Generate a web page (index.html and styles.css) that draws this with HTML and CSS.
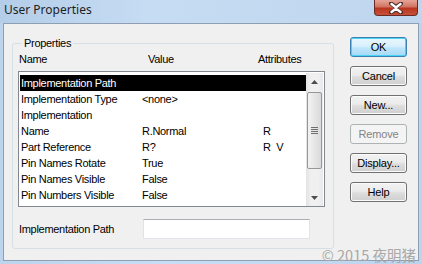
FILE: index.html
```html
<!DOCTYPE html>
<html lang="en">
<head>
    <meta charset="UTF-8">
    <title>User Properties</title>
    <link rel="stylesheet" href="styles.css">
</head>
<body>
    <div class="window">
        <div class="titlebar">
            <span class="title">User Properties</span>
            <div class="close-btn">
                <svg width="16" height="12" viewBox="0 0 16 12">
                    <path d="M3 1.5 L8 5 L13 1.5 M3 10.5 L8 7 L13 10.5" stroke="#4a2a2a" stroke-width="4" fill="none" stroke-linecap="round"/>
                    <path d="M3.5 2 L8 5.5 L12.5 2 M3.5 10 L8 6.5 L12.5 10" stroke="#ffffff" stroke-width="2.4" fill="none" stroke-linecap="round"/>
                </svg>
            </div>
        </div>

        <div class="client">
            <fieldset class="group">
                <legend>Properties</legend>

                <div class="list-head">
                    <span class="col-name">Name</span>
                    <span class="col-value">Value</span>
                    <span class="col-attr">Attributes</span>
                </div>

                <div class="listbox">
                    <div class="rows">
                        <div class="row selected"><span class="col-name">Implementation Path</span><span class="col-value"></span><span class="col-attr"></span></div>
                        <div class="row"><span class="col-name">Implementation Type</span><span class="col-value">&lt;none&gt;</span><span class="col-attr"></span></div>
                        <div class="row"><span class="col-name">Implementation</span><span class="col-value"></span><span class="col-attr"></span></div>
                        <div class="row"><span class="col-name">Name</span><span class="col-value">R.Normal</span><span class="col-attr">R</span></div>
                        <div class="row"><span class="col-name">Part Reference</span><span class="col-value">R?</span><span class="col-attr">R&nbsp;&nbsp;V</span></div>
                        <div class="row"><span class="col-name">Pin Names Rotate</span><span class="col-value">True</span><span class="col-attr"></span></div>
                        <div class="row"><span class="col-name">Pin Names Visible</span><span class="col-value">False</span><span class="col-attr"></span></div>
                        <div class="row"><span class="col-name">Pin Numbers Visible</span><span class="col-value">False</span><span class="col-attr"></span></div>
                    </div>
                    <div class="scrollbar">
                        <div class="arrow">
                            <svg width="7" height="4" viewBox="0 0 7 4"><path d="M0 4 L3.5 0 L7 4 Z" fill="#4d4d4d"/></svg>
                        </div>
                        <div class="thumb">
                            <div class="grip"></div>
                            <div class="grip"></div>
                            <div class="grip"></div>
                            <div class="grip"></div>
                        </div>
                        <div class="track"></div>
                        <div class="arrow">
                            <svg width="7" height="4" viewBox="0 0 7 4"><path d="M0 0 L7 0 L3.5 4 Z" fill="#4d4d4d"/></svg>
                        </div>
                    </div>
                </div>

                <div class="edit-row">
                    <label for="path">Implementation Path</label>
                    <input type="text" id="path">
                </div>
            </fieldset>

            <div class="buttons">
                <button class="default">OK</button>
                <button>Cancel</button>
                <button>New...</button>
                <button class="disabled">Remove</button>
                <button>Display...</button>
                <button>Help</button>
            </div>

            <div class="watermark">&copy; 2015 夜明猪</div>
        </div>
    </div>
</body>
</html>
```

FILE: styles.css
```css
body {
    margin: 0;
    width: 422px;
    height: 264px;
    overflow: hidden;
    font-family: 'Liberation Sans', Arial, sans-serif;
    font-size: 11px;
    letter-spacing: -0.3px;
    color: #000;
}

.window {
    width: 422px;
    height: 264px;
    box-sizing: border-box;
    background: linear-gradient(90deg, #bcd4ec 0%, #c8def4 40%, #bcd4ec 100%);
    display: flex;
    flex-direction: column;
}

.titlebar {
    height: 23px;
    display: flex;
    justify-content: space-between;
    align-items: flex-start;
    background: linear-gradient(90deg, #b4cde8 0%, #c5dcf3 35%, #bfd6ee 100%);
}

.title {
    font-family: 'Noto Sans', 'Open Sans', sans-serif;
    font-size: 12px;
    letter-spacing: 0;
    color: #1e1e1e;
    padding: 1px 0 0 4px;
    line-height: 18px;
}

.close-btn {
    width: 44px;
    height: 16px;
    margin-right: 4px;
    border: 1px solid #6b2b24;
    border-top: none;
    border-radius: 0 0 4px 4px;
    background: linear-gradient(#e6a597 0%, #d07561 45%, #b9351f 55%, #c6513a 100%);
    display: flex;
    align-items: center;
    justify-content: center;
    box-sizing: border-box;
}

.client {
    position: relative;
    margin: 0 3px 3px 3px;
    flex: 1;
    background-color: #f0f0f0;
    border: 1px solid #8e9fb3;
    display: flex;
    align-items: flex-start;
    padding: 13px 0 0 8px;
}

.group {
    margin: 0;
    width: 322px;
    height: 212px;
    box-sizing: border-box;
    border: 1px solid #d5dfe5;
    border-radius: 3px;
    padding: 3px 7px 0 5px;
}

.group legend {
    padding: 0 2px;
    margin-left: 4px;
    line-height: 13px;
}

.list-head,
.row {
    display: flex;
    white-space: nowrap;
}

.list-head {
    line-height: 13px;
    margin-bottom: 5px;
    padding-left: 1px;
}

.list-head .col-name { width: 127px; }
.list-head .col-value { width: 110px; margin-left: 2px; }
.list-head .col-attr { width: 60px; }

.listbox {
    width: 307px;
    height: 136px;
    box-sizing: border-box;
    border: 1px solid #828790;
    background-color: #fff;
    display: flex;
    padding: 4px 1px 1px 1px;
}

.rows {
    flex: 1;
    margin-top: -1px;
}

.row {
    height: 16px;
    line-height: 17px;
    padding-left: 1px;
}

.row .col-name { width: 121px; }
.row .col-value { width: 121px; }
.row .col-attr { width: 40px; }

.row.selected {
    background-color: #000;
    color: #fff;
}

.scrollbar {
    width: 17px;
    margin: -3px 0 -1px 0;
    background: linear-gradient(90deg, #e3e3e3, #f0f0f0 30%, #f0f0f0 70%, #e8e8e8);
    display: flex;
    flex-direction: column;
}

.arrow {
    height: 17px;
    display: flex;
    align-items: center;
    justify-content: center;
}

.thumb {
    height: 75px;
    margin: 2px 1px 0 1px;
    border: 1px solid #979797;
    border-radius: 2px;
    background: linear-gradient(90deg, #f2f2f2, #e6e6e6 50%, #d9d9d9);
    display: flex;
    flex-direction: column;
    align-items: center;
    justify-content: center;
    gap: 1px;
}

.grip {
    width: 7px;
    height: 1px;
    background-color: #6e6e6e;
}

.track {
    flex: 1;
}

.edit-row {
    display: flex;
    align-items: center;
    margin-top: 12px;
}

.edit-row label {
    width: 124px;
    padding-left: 1px;
}

.edit-row input {
    width: 167px;
    height: 20px;
    box-sizing: border-box;
    margin: 0;
    border: 1px solid #e2e3ea;
    border-top-color: #abadb3;
    background-color: #fff;
}

.buttons {
    margin-left: 16px;
    display: flex;
    flex-direction: column;
    gap: 9px;
}

button {
    width: 57px;
    height: 20px;
    padding: 0;
    font-family: 'Liberation Sans', Arial, sans-serif;
    font-size: 11px;
    letter-spacing: -0.2px;
    color: #000;
    border: 1px solid #707070;
    border-radius: 3px;
    background: linear-gradient(#f2f2f2 0%, #ebebeb 45%, #dddddd 55%, #cfcfcf 100%);
    box-shadow: inset 0 0 0 1px #fbfbfb;
}

button.default {
    border-color: #3c7fb1;
    background: linear-gradient(#eaf6fd 0%, #d9f0fc 45%, #bee6fd 55%, #a7d9f5 100%);
    box-shadow: inset 0 0 0 1px #48d4f5;
}

button.disabled {
    color: #838383;
    border-color: #adb2b5;
    background: #f4f4f4;
    box-shadow: none;
}

.watermark {
    position: absolute;
    right: 2px;
    bottom: -4px;
    font-family: 'Noto Sans CJK SC', sans-serif;
    font-size: 14.5px;
    letter-spacing: 0;
    color: #a8a8a8;
    line-height: 18px;
}
```
